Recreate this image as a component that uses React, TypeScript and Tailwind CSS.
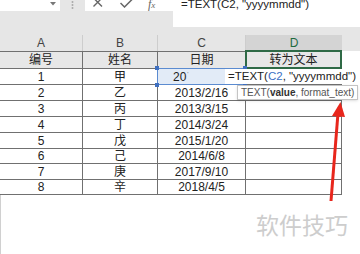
import React from "react";

const rows = [
  { a: "2", b: "乙", c: "2013/2/16", h: "h-[16px]" },
  { a: "3", b: "丙", c: "2013/3/15", h: "h-[16px]" },
  { a: "4", b: "丁", c: "2014/3/24", h: "h-[16px]" },
  { a: "5", b: "戊", c: "2015/1/20", h: "h-[16px]" },
  { a: "6", b: "己", c: "2014/6/8", h: "h-[15px]" },
  { a: "7", b: "庚", c: "2017/9/10", h: "h-[16px]" },
  { a: "8", b: "辛", c: "2018/4/5", h: "h-[15px]" },
];

const cell = "flex items-center justify-center border-r border-[#707070] leading-none";

const App = () => {
  return (
    <div className="relative w-[360px] h-[254px] overflow-hidden bg-white text-[12px] text-[#222] font-['Liberation_Sans','Noto_Sans_CJK_SC',sans-serif]">
      {/* formula bar */}
      <div className="flex h-[35px] bg-[#e6e6e6]">
        <div className="flex h-[11px] w-[60px] justify-end bg-white pr-[4px] pt-[2px]">
          <svg width="6" height="4" viewBox="0 0 6 4">
            <path d="M0 0 L6 0 L3 3.5 Z" fill="#777" />
          </svg>
        </div>
        <div className="flex w-[25px] justify-center pt-[1px]">
          <svg width="3" height="8" viewBox="0 0 3 8">
            <circle cx="1.5" cy="1" r="1" fill="#aaa" />
            <circle cx="1.5" cy="4" r="1" fill="#aaa" />
            <circle cx="1.5" cy="7" r="1" fill="#aaa" />
          </svg>
        </div>
        <div className="flex h-[11px] w-[88px] items-start bg-white pl-[8px]">
          <svg width="10" height="7" viewBox="0 0 10 7" className="shrink-0">
            <path d="M0.5 -2 L9 6.5 M9 -2 L0.5 6.5" stroke="#666" strokeWidth="1.4" fill="none" />
          </svg>
          <svg width="13" height="8" viewBox="0 0 13 8" className="ml-[17px] shrink-0">
            <path d="M0.5 3 L4.5 7 L12.5 -1" stroke="#666" strokeWidth="1.5" fill="none" />
          </svg>
          <span className="ml-[15px] -mt-[2px] font-['Liberation_Serif',serif] text-[12px] italic leading-none text-[#666]">
            f<span className="text-[9px]">x</span>
          </span>
        </div>
        <div className="h-[27px] flex-1 bg-white pl-[8px]">
          <div className="-mt-[2px] whitespace-nowrap text-[11.5px] leading-[12px]">
            =TEXT(C2, "yyyymmdd")
          </div>
        </div>
      </div>

      {/* column headers */}
      <div className="flex h-[16px] bg-[#e6e6e6] text-[12px] text-[#444]">
        <div className="flex w-[83px] items-center justify-center border-r border-[#cdcdcd]">A</div>
        <div className="flex w-[75px] items-center justify-center border-r border-[#cdcdcd]">B</div>
        <div className="flex w-[88px] items-center justify-center border-r border-[#cdcdcd]">C</div>
        <div className="flex w-[96px] items-center justify-center bg-[#d4d4d4] text-[#1f6b3f]">D</div>
      </div>

      {/* table */}
      <div className="w-[342px] border-t border-[#707070]">
        <div className="flex h-[17px] border-b border-[#707070] bg-[#e7e7e7]">
          <div className={`${cell} w-[83px]`}>编号</div>
          <div className={`${cell} w-[75px]`}>姓名</div>
          <div className={`${cell} w-[88px]`}>日期</div>
          <div className={`${cell} w-[96px]`}>转为文本</div>
        </div>
        <div className="flex h-[16px] border-b border-[#707070]">
          <div className={`${cell} w-[83px]`}>1</div>
          <div className={`${cell} w-[75px]`}>甲</div>
          <div className="flex w-[88px] items-center border-r border-[#707070] bg-[#e2ebf7] pl-[15px] leading-none">
            20<span className="ml-[1px] -mt-[6px] text-[6px] text-[#666]">'</span>
          </div>
          <div className={`${cell} w-[96px]`}></div>
        </div>
        {rows.map((r) => (
          <div key={r.a} className={`flex border-b border-[#707070] ${r.h}`}>
            <div className={`${cell} w-[83px]`}>{r.a}</div>
            <div className={`${cell} w-[75px]`}>{r.b}</div>
            <div className={`${cell} w-[88px]`}>{r.c}</div>
            <div className={`${cell} w-[96px]`}></div>
          </div>
        ))}
      </div>

      {/* empty area + watermark */}
      <div className="flex h-[59px] justify-end border-l border-[#d0d0d0] pr-[12px] pt-[18px]">
        <span className="text-[23px] leading-[23px] text-[#cdcdcd] font-['Noto_Sans_CJK_SC',sans-serif]">
          软件技巧
        </span>
      </div>

      {/* D1 selection border */}
      <div className="absolute left-[245px] top-[50px] h-[19px] w-[97px] border-2 border-[#2f6a46]" />

      {/* C2 reference highlight */}
      <div className="absolute left-[157px] top-[68px] h-[17px] w-[89px] border border-[#5b8bd0]" />
      <div className="absolute left-[155px] top-[66px] size-[4px] bg-[#3e6fc0]" />
      <div className="absolute left-[155px] top-[83px] size-[4px] bg-[#3e6fc0]" />
      <div className="absolute left-[243px] top-[66px] size-[4px] bg-[#3e6fc0]" />
      <div className="absolute left-[243px] top-[83px] size-[4px] bg-[#3e6fc0]" />

      {/* in-cell editor */}
      <div className="absolute left-[225px] top-[69px] flex h-[15px] w-[135px] items-center whitespace-nowrap bg-white pl-[3px] text-[11.5px] leading-none">
        =TEXT(<span className="text-[#3a6fc4]">C2</span>, "yyyymmdd")
      </div>

      {/* tooltip */}
      <div className="absolute left-[237px] top-[85px] flex h-[15px] w-[121px] items-center whitespace-nowrap border border-[#c4c4c4] bg-white pl-[3px] text-[10px] leading-none text-[#555] shadow-sm">
        TEXT(<span className="font-bold text-[#333]">value</span>, format_text)
      </div>

      {/* red arrow */}
      <svg className="pointer-events-none absolute left-0 top-0" width="360" height="254" viewBox="0 0 360 254">
        <path d="M331 201 L338 113" stroke="#e8261c" strokeWidth="3" fill="none" />
        <path d="M340.5 102 L345 117 L332 116 Z" fill="#e8261c" />
      </svg>
    </div>
  );
};

export default App;
